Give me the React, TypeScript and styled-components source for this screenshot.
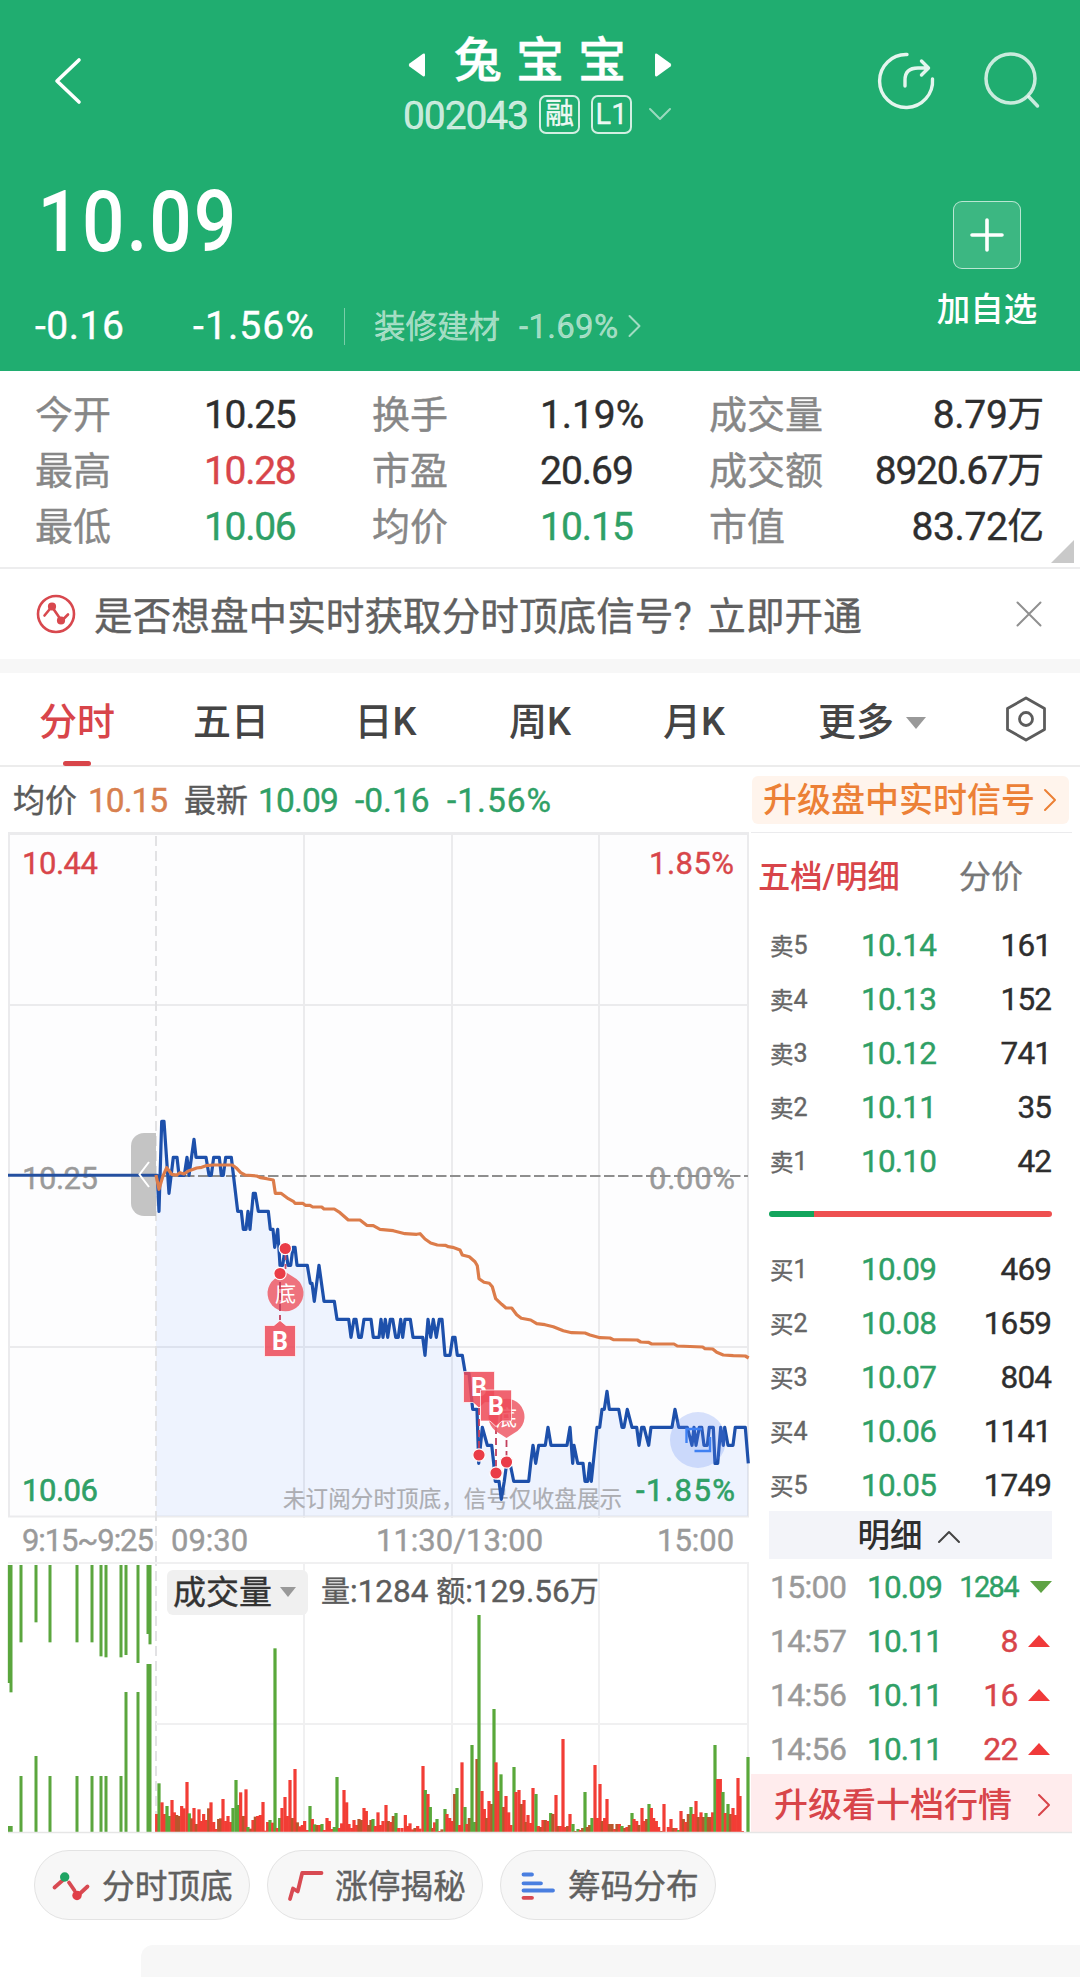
import React from 'react';
import styled, { createGlobalStyle } from 'styled-components';

const C = {
  green: '#20ad70',
  up: '#d8454a',
  down: '#2fa066',
  ink: '#2e2e2e',
  label: '#878787',
  mute: '#9a9a9a',
  rule: '#ebebed',
  orange: '#d8804f',
};

const Global = createGlobalStyle`
  * { box-sizing: border-box; }
  body {
    margin: 0;
    background: #fff;
    font-family: Roboto, "Noto Sans CJK SC", sans-serif;
    -webkit-text-stroke-width: 0.4px;
    color: ${C.ink};
    white-space: nowrap;
  }
  svg { display: block; flex: none; overflow: visible; }
`;

const Page = styled.main`
  width: 1080px;
  height: 1977px;
  overflow: hidden;
  background: #fff;
  display: flex;
  flex-direction: column;
`;

const Txt = styled.span<{ $size: number; $ls?: number; $color?: string; $w?: number; $weight?: number; $ml?: number }>`
  flex: none;
  font-size: ${p => p.$size}px;
  letter-spacing: ${p => p.$ls ?? 0}px;
  color: ${p => p.$color ?? 'inherit'};
  width: ${p => (p.$w ? `${p.$w}px` : 'auto')};
  font-weight: ${p => p.$weight ?? 400};
  -webkit-text-stroke-width: ${p => (p.$weight ? 0 : 0.4)}px;
  margin-left: ${p => p.$ml ?? 0}px;
`;

/* ---------- header ---------- */

const Header = styled.header`
  height: 371px;
  flex: none;
  background: ${C.green};
  color: #fff;
  padding-top: 30px;
`;

const Nav = styled.nav`
  display: grid;
  grid-template-columns: 1fr auto 1fr;
  height: 110px;
  padding: 0 39px;
`;

const NavIcons = styled.div<{ $end?: boolean }>`
  display: flex;
  gap: 44px;
  padding-top: 21px;
  justify-content: ${p => (p.$end ? 'flex-end' : 'flex-start')};
`;

const TitleBlock = styled.div`
  display: flex;
  flex-direction: column;
  align-items: center;
`;

const NameRow = styled.div`
  display: flex;
  align-items: center;
  height: 58px;
  padding-top: 11px;
  gap: 29px;
`;

const Name = styled.h1`
  margin: -7px -14px 0 0;
  font-size: 48px;
  font-weight: 500;
  letter-spacing: 14px;
  line-height: 50px;
`;

const CodeRow = styled.div`
  display: flex;
  align-items: center;
  height: 52px;
  width: 274px;
`;

const Code = styled.span`
  width: 129px;
  padding-top: 3px;
  font-size: 39px;
  letter-spacing: -1.1px;
  color: rgba(255, 255, 255, 0.76);
`;

const Tag = styled.span<{ $ml: number; $size: number }>`
  width: 41px;
  height: 39px;
  border: 2px solid rgba(255, 255, 255, 0.8);
  border-radius: 7px;
  display: flex;
  align-items: center;
  justify-content: center;
  font-size: ${p => p.$size}px;
  line-height: 35px;
  margin-left: ${p => p.$ml}px;
  color: rgba(255, 255, 255, 0.92);
`;

const Quote = styled.section`
  display: flex;
  justify-content: space-between;
  padding: 32px 41px 0 35px;
`;

const Price = styled.div`
  font-size: 86px;
  line-height: 100px;
  font-weight: 500;
  letter-spacing: 2.2px;
  padding-left: 3px;
  transform: scaleX(0.87);
  transform-origin: left;
  -webkit-text-stroke-width: 0;
`;

const ChangeRow = styled.div`
  display: flex;
  align-items: center;
  height: 44px;
  margin-top: 32px;
`;

const Sector = styled.a`
  display: flex;
  align-items: center;
  height: 37px;
  border-left: 1px solid rgba(255, 255, 255, 0.4);
  padding-left: 29px;
  color: rgba(255, 255, 255, 0.58);
`;

const SectorName = styled.span`
  width: 145px;
  margin-top: -4px;
  font-size: 31.5px;
`;

const AddBox = styled.div`
  width: 104px;
  padding-top: 29px;
  display: flex;
  flex-direction: column;
  align-items: center;
  gap: 21px;
  font-size: 33.5px;
  line-height: 40px;
  font-weight: 500;
  -webkit-text-stroke-width: 0;
`;

const AddButton = styled.div`
  width: 68px;
  height: 68px;
  border-radius: 9px;
  border: 1px solid rgba(255, 255, 255, 0.65);
  background: rgba(255, 255, 255, 0.13);
  display: flex;
  align-items: center;
  justify-content: center;
`;

/* ---------- stats ---------- */

const Stats = styled.section`
  flex: none;
  position: relative;
  display: grid;
  grid-template-columns: 169px 168px 168px 169px 120px 1fr;
  grid-auto-rows: 56px;
  line-height: 56px;
  height: 198px;
  padding: 16px 36px 0 35px;
  border-bottom: 2px solid #ededee;
  font-size: 38px;
`;

const StatLabel = styled.span`
  color: ${C.label};
`;

const StatValue = styled.span<{ $color?: string; $right?: boolean; $ls?: number }>`
  font-size: 39px;
  letter-spacing: ${p => p.$ls ?? -1.3}px;
  color: ${p => p.$color ?? C.ink};
  display: flex;
  justify-content: ${p => (p.$right ? 'flex-end' : 'flex-start')};
`;

const Unit = styled.span`
  font-size: 36.5px;
  letter-spacing: 0;
`;

const Corner = styled.i`
  position: absolute;
  right: 6px;
  bottom: 4px;
  border-left: 23px solid transparent;
  border-bottom: 23px solid #c9c9c9;
`;

const Notice = styled.section`
  flex: none;
  height: 90px;
  display: flex;
  align-items: center;
  padding: 0 38px 0 36px;
  font-size: 38.6px;
  color: #606060;
`;

const NoticeText = styled.span`
  margin-left: 18px;
  flex: 1;
  line-height: 60px;
  padding-top: 6px;
  letter-spacing: 0.05px;
  word-spacing: 6px;
`;

const Band = styled.div`
  flex: none;
  height: 14px;
  background: #f7f7f7;
`;

/* ---------- tabs ---------- */

const Tabs = styled.nav`
  flex: none;
  height: 94px;
  border-bottom: 2px solid #ececec;
  display: flex;
  padding-right: 33px;
`;

const Tab = styled.div<{ $active?: boolean; $w: number }>`
  position: relative;
  width: ${p => p.$w}px;
  height: 93px;
  line-height: 93px;
  padding-top: 6px;
  display: flex;
  align-items: center;
  justify-content: center;
  font-size: 38px;
  font-weight: 500;
  -webkit-text-stroke-width: 0;
  color: ${p => (p.$active ? C.up : '#444')};
  &::after {
    content: '';
    display: ${p => (p.$active ? 'block' : 'none')};
    position: absolute;
    bottom: 0;
    left: 63px;
    width: 28px;
    height: 5px;
    border-radius: 3px;
    background: ${C.up};
  }
`;

const Settings = styled.div`
  flex: 1;
  display: flex;
  justify-content: flex-end;
  align-items: center;
`;

const Caret = styled.i<{ $w: number; $h: number; $color: string; $ml?: number; $up?: boolean }>`
  flex: none;
  margin-left: ${p => p.$ml ?? 0}px;
  border-left: ${p => p.$w / 2}px solid transparent;
  border-right: ${p => p.$w / 2}px solid transparent;
  border-top: ${p => (p.$up ? 0 : p.$h)}px solid ${p => p.$color};
  border-bottom: ${p => (p.$up ? p.$h : 0)}px solid ${p => p.$color};
`;

const InfoRow = styled.section`
  flex: none;
  height: 65px;
  display: flex;
  align-items: center;
  padding: 0 11px 0 13px;
  line-height: 48px;
  color: #5a5a5a;
`;

const Readout = styled.div`
  display: flex;
  align-items: center;
  padding-top: 2px;
`;

const Upgrade = styled.a`
  margin-left: auto;
  width: 317px;
  height: 48px;
  border-radius: 6px;
  background: #fff4ec;
  display: flex;
  align-items: center;
  justify-content: space-between;
  padding: 1px 13px 0 11px;
  color: #ec8036;
  font-size: 34px;
  font-weight: 500;
  -webkit-text-stroke-width: 0;
`;

/* ---------- body ---------- */

const Body = styled.section`
  flex: none;
  display: flex;
  height: 1002px;
`;

const ChartColumn = styled.div`
  width: 751px;
  display: flex;
  flex-direction: column;
`;

const TimeAxis = styled.div`
  height: 45px;
  display: grid;
  grid-template-columns: 149px 205px 281px 1fr;
  padding-left: 22px;
  line-height: 45px;
  font-size: 31px;
  color: ${C.mute};
`;

const VolumeBox = styled.div`
  position: relative;
`;

const VolumeHead = styled.div`
  position: absolute;
  top: 6px;
  left: 167px;
  display: flex;
  align-items: center;
  color: #5c5c5c;
`;

const Reading = styled.div`
  margin: 0 0 0 13px;
  font-size: 29px;
  line-height: 45px;
`;

const Indicator = styled.div`
  width: 141px;
  height: 45px;
  border-radius: 6px;
  background: #f0f0f0;
  display: flex;
  align-items: center;
  padding-left: 6px;
  font-size: 33px;
  line-height: 45px;
  color: #333;
`;

const Book = styled.aside`
  width: 321px;
  display: flex;
  flex-direction: column;
  border-top: 1px solid ${C.rule};
`;

const BookTabs = styled.div`
  height: 85px;
  line-height: 89px;
  display: flex;
  padding-left: 7px;
`;

const BookRow = styled.div`
  height: 54px;
  display: grid;
  grid-template-columns: 91px 90px 1fr;
  align-items: center;
  padding: 0 21px 0 19px;
`;

const Level = styled.span`
  display: flex;
  align-items: center;
  font-size: 23.5px;
  color: #666;
`;

const RowPrice = styled.span`
  font-size: 31.5px;
  letter-spacing: -0.8px;
  color: ${C.down};
`;

const RowVolume = styled.span`
  font-size: 31.5px;
  letter-spacing: -0.9px;
  text-align: right;
  color: ${C.ink};
`;

const Ratio = styled.div`
  height: 6px;
  margin: 23px 20px 25px 18px;
  border-radius: 3px;
  background: linear-gradient(to right, #12a55c 45px, #ee5050 45px);
`;

const DetailHead = styled.div`
  height: 48px;
  margin: -1px 20px 1px 18px;
  background: #f3f4f9;
  display: flex;
  align-items: center;
  justify-content: center;
  gap: 15px;
  padding: 3px 4px 0 0;
  font-size: 32.5px;
  line-height: 45px;
  font-weight: 500;
  -webkit-text-stroke-width: 0;
`;

const Tick = styled.div`
  height: 54px;
  display: grid;
  grid-template-columns: 97px 78px 1fr 34px;
  align-items: center;
  padding: 0 20px 0 19px;
  font-size: 32px;
`;

const TickVolume = styled.span<{ $color: string; $size: number }>`
  text-align: right;
  color: ${p => p.$color};
  font-size: ${p => p.$size}px;
  letter-spacing: ${p => (p.$size < 30 ? -1.6 : -0.6)}px;
`;

const TickMark = styled.span<{ $up: boolean }>`
  display: flex;
  justify-content: flex-end;
  padding-right: ${p => (p.$up ? 2 : 0)}px;
`;

const TenLevels = styled.a`
  height: 58px;
  margin-top: -2px;
  background: #ffeced;
  display: flex;
  align-items: center;
  justify-content: space-between;
  padding: 4px 22px 0 23px;
  font-size: 34px;
  line-height: 54px;
  font-weight: 500;
  -webkit-text-stroke-width: 0;
  color: ${C.up};
`;

/* ---------- footer ---------- */

const Pills = styled.div`
  flex: none;
  display: flex;
  gap: 17px;
  padding: 16px 34px 0;
`;

const Pill = styled.a`
  width: 216px;
  height: 70px;
  border-radius: 35px;
  border: 1px solid #e3e3e3;
  background: #f7f7f7;
  display: flex;
  align-items: center;
  gap: 12px;
  padding: 0 0 3px 17px;
  font-size: 32.7px;
  color: #606060;
`;

const Sheet = styled.div`
  flex: none;
  height: 32px;
  margin: 25px 0 0 141px;
  border-top-left-radius: 12px;
  background: #f7f7f7;
`;

/* ---------- data ---------- */

// Minute prices of the session: [x in thirds of a pixel, cents below the previous close].
const MORNING: number[][] = [
  [468, 0], [472, 0], [477, 2], [485, -3], [492, -3], [507, 1], [520, -1], [531, -1], [537, 0], [553, 0], [561, -1], [567, 0],
  [582, -2], [588, -1], [618, -1], [627, 0], [634, 0], [641, -1], [658, -1], [664, 0], [670, 0], [677, -1], [694, -1], [713, 2],
  [724, 2], [730, 3], [738, 3], [744, 2], [750, 3], [760, 1], [766, 1], [775, 2], [805, 2], [811, 3], [819, 3], [824, 4],
  [833, 3], [840, 5], [848, 5], [856, 4], [864, 5], [872, 5], [879, 4], [885, 4], [891, 5], [922, 5], [931, 6], [936, 6],
  [943, 7], [957, 5], [972, 7], [1003, 7], [1011, 8], [1046, 8], [1053, 9], [1062, 8], [1068, 8], [1076, 9], [1084, 9],
  [1092, 8], [1113, 8], [1120, 9], [1137, 9], [1143, 8], [1149, 9], [1156, 8], [1163, 9], [1171, 8], [1178, 8], [1187, 9],
  [1195, 9], [1202, 8],
];
const AFTERNOON: number[][] = [
  [8, 9], [15, 8], [31, 8], [39, 9], [68, 9], [75, 10], [84, 8], [92, 9], [100, 8], [109, 9], [118, 8], [126, 8], [135, 10],
  [150, 10], [158, 9], [165, 9], [172, 10], [187, 10], [196, 11], [207, 11], [218, 13], [231, 13], [236, 16], [247, 14],
  [262, 15], [275, 15], [281, 16], [286, 17], [297, 17], [304, 18], [313, 17], [320, 16], [330, 16], [341, 17], [386, 17],
  [392, 16], [399, 15], [407, 16], [416, 15], [436, 15], [444, 14], [453, 15], [501, 15], [510, 14], [518, 16], [522, 15],
  [533, 16], [549, 16], [555, 17], [563, 17], [569, 16], [574, 17], [591, 14], [599, 14], [606, 13], [613, 13], [621, 12],
  [628, 13], [656, 13], [666, 14], [672, 14], [682, 13], [696, 14], [710, 14], [717, 15], [725, 14], [732, 14], [746, 15],
  [753, 14], [816, 14], [825, 13], [836, 14], [862, 14], [876, 15], [882, 14], [888, 15], [898, 14], [905, 14], [912, 15],
  [922, 15], [928, 14], [940, 14], [945, 16], [953, 16], [962, 14], [970, 15], [974, 14], [984, 15], [999, 15], [1006, 14],
  [1036, 14], [1045, 16],
];
const AVG_AM: number[][] = [
  [468, 345], [477, 388], [488, 350], [500, 323], [515, 343], [530, 345], [540, 338], [552, 342], [565, 333], [580, 328],
  [590, 324], [605, 322], [618, 317], [640, 315], [697, 315], [710, 325], [722, 338], [735, 345], [770, 348], [782, 353],
  [800, 356], [820, 360], [826, 400], [843, 400], [865, 416], [880, 424], [885, 430], [908, 430], [916, 436], [930, 436],
  [938, 441], [965, 441], [972, 447], [1003, 447], [1020, 458], [1045, 480], [1080, 480], [1100, 496], [1120, 497],
  [1140, 508], [1180, 512], [1215, 521], [1250, 523],
];
const AVG_PM: number[][] = [
  [60, 101], [75, 117], [92, 129], [112, 135], [136, 136], [145, 140], [158, 142], [180, 150], [187, 165], [208, 170],
  [225, 185], [232, 197], [237, 236], [252, 247], [268, 250], [277, 260], [287, 296], [305, 313], [318, 324], [335, 324],
  [350, 344], [364, 355], [392, 360], [410, 371], [435, 374], [460, 380], [490, 392], [515, 398], [555, 399], [570, 405],
  [600, 413], [630, 414], [640, 419], [712, 420], [722, 426], [745, 427], [755, 432], [822, 432], [832, 438], [908, 441],
  [915, 446], [938, 447], [950, 457], [970, 465], [1000, 467], [1036, 468], [1046, 474],
];

const level = (n: number) => 1175.3 + 18 * n;
const pricePts = [
  ...MORNING.map(([x, n]) => [x / 3, level(n)]),
  ...AFTERNOON.map(([x, n]) => [400 + x / 3, level(n)]),
];
const avgPts = [
  ...AVG_AM.map(([x, y]) => [x / 3, 1060 + y / 3]),
  ...AVG_PM.map(([x, y]) => [400 + x / 3, 1200 + y / 3]),
];
const join = (pts: number[][]) => pts.map(p => `${p[0].toFixed(1)},${p[1].toFixed(1)}`).join(' ');

// Minute volumes: x, top and tone (r rising, g falling, m mixed).
const VOL_AM =
  '470 942 r,477 850 g,486 907 r,493 942 r,501 918 g,508 948 g,516 900 r,523 937 r,530 945 m,537 948 m,545 918 r,552 925 r,561 846 r,568 940 g,575 955 m,582 924 r,589 972 m,597 928 r,604 963 r,611 942 r,618 960 r,626 925 m,633 907 r,641 966 r,648 987 r,656 957 m,662 955 m,669 897 r,677 963 r,684 948 r,692 966 r,699 924 g,708 840 g,715 915 g,722 877 r,730 948 m,738 868 r,744 981 g,752 986 m,759 960 r,766 950 m,773 948 r,781 945 r,789 906 r,796 992 r,803 966 r,810 960 g,818 968 r,825 445 g,832 984 r,839 954 g,846 924 r,855 891 r,862 948 r,870 840 r,877 954 m,885 807 r,892 967 m,899 979 r,907 975 r,914 963 r,922 990 r,930 918 g,937 957 r,944 973 g,951 975 m,959 975 r,966 972 g,973 990 r,981 954 r,988 963 r,996 987 r,1003 981 g,1011 831 g,1018 984 r,1025 970 r,1032 870 r,1040 907 r,1047 972 r,1055 984 r,1062 960 r,1070 975 r,1077 957 m,1084 960 m,1092 924 r,1099 933 r,1106 975 m,1113 960 m,1119 957 g,1126 978 r,1134 937 r,1141 975 r,1149 963 r,1158 915 r,1165 963 m,1173 966 r,1180 948 m,1188 939 g,1196 984 r,1206 984 r,1216 945 r,1223 978 r,1230 970 r,1238 988 r,1245 984 m,1253 978 r,1260 986 r';
const VOL_PM =
  '69 798 r,76 870 g,84 882 r,91 921 g,98 984 m,104 967 r,111 957 g,118 993 r,126 988 m,135 927 g,141 942 r,149 954 r,156 963 r,164 882 m,171 864 g,179 975 r,186 787 r,195 921 g,201 972 r,208 954 m,216 735 g,223 966 g,231 777 m,237 345 g,246 873 r,253 927 r,260 954 m,267 903 r,275 912 m,282 627 g,288 787 r,296 873 r,303 823 g,311 921 m,318 888 r,326 937 r,333 975 r,342 801 g,348 876 r,357 870 r,364 912 m,372 900 r,378 966 m,384 945 r,392 969 r,399 864 r,408 882 g,415 978 r,422 981 m,429 960 r,436 960 m,444 963 r,452 939 g,459 942 m,468 885 r,474 978 m,481 978 r,489 717 r,496 981 r,503 978 m,510 942 r,519 972 g,526 993 m,534 987 g,541 990 r,548 984 m,555 876 g,562 981 m,569 975 m,576 954 g,585 795 r,592 954 r,600 852 r,607 963 m,614 954 r,621 897 r,628 972 m,636 972 m,644 987 r,651 972 m,658 972 r,666 978 g,674 984 m,681 981 r,688 975 m,696 939 g,702 957 r,710 963 r,717 975 m,726 924 r,733 963 r,740 957 m,747 912 g,754 924 r,761 954 r,769 963 r,776 981 r,784 993 m,792 912 r,805 981 r,813 957 r,820 984 m,828 984 r,836 990 g,843 933 r,850 957 m,857 966 r,865 942 m,873 921 g,880 942 r,888 903 r,895 951 m,903 937 r,910 951 m,918 939 g,925 951 m,932 951 m,938 937 r,945 735 g,953 837 r,961 837 r,969 876 g,976 939 r,984 912 g,991 942 m,999 924 r,1006 945 r,1014 834 r,1020 888 r,1027 993 r,1044 771 g';

const TONES: Record<string, string> = { r: '#f23d35', g: '#59a83a', m: '#b8562c' };
const parseBars = (src: string, x0: number) =>
  src.split(',').map(s => {
    const [x, y, t] = s.split(' ');
    return { x: x0 + Number(x) / 3, y: 1500 + Number(y) / 3, fill: TONES[t] };
  });
const BARS = [...parseBars(VOL_AM, 0), ...parseBars(VOL_PM, 400)];

// Call-auction bars: x, top and bottom, width.
const AUCTION: number[][] = [
  [28.5, 195, 549, 10], [33, 195, 577, 9], [63, 195, 427, 9], [108, 195, 367, 9], [150, 195, 427, 9], [231, 195, 427, 9],
  [276, 195, 427, 9], [303, 195, 469, 9], [318, 195, 472, 9], [363, 195, 472, 9], [378, 195, 465, 9], [414, 195, 489, 9],
  [446, 195, 402, 13], [450, 195, 433, 9],
  [31, 978, 996, 14], [63, 828, 996, 9], [108, 768, 996, 9], [150, 828, 996, 9], [231, 828, 996, 9], [276, 828, 996, 9],
  [303, 828, 996, 9], [318, 828, 996, 9], [363, 828, 996, 9], [378, 576, 996, 9], [414, 576, 996, 9], [447, 492, 996, 15],
];

const STATS: { k: string; v: string; u?: string; c?: string; r?: boolean; ls?: number }[] = [
  { k: '今开', v: '10.25' }, { k: '换手', v: '1.19%', ls: -0.1 }, { k: '成交量', v: '8.79', u: '万', r: true, ls: -0.3 },
  { k: '最高', v: '10.28', c: C.up }, { k: '市盈', v: '20.69', ls: -1 }, { k: '成交额', v: '8920.67', u: '万', r: true },
  { k: '最低', v: '10.06', c: C.down }, { k: '均价', v: '10.15', c: C.down, ls: -1 }, { k: '市值', v: '83.72', u: '亿', r: true, ls: -0.4 },
];

const SELLS = [['卖', '5', '10.14', '161'], ['卖', '4', '10.13', '152'], ['卖', '3', '10.12', '741'], ['卖', '2', '10.11', '35'], ['卖', '1', '10.10', '42']];
const BUYS = [['买', '1', '10.09', '469'], ['买', '2', '10.08', '1659'], ['买', '3', '10.07', '804'], ['买', '4', '10.06', '1141'], ['买', '5', '10.05', '1749']];
const TICKS = [
  { t: '15:00', p: '10.09', v: '1284', up: false },
  { t: '14:57', p: '10.11', v: '8', up: true },
  { t: '14:56', p: '10.11', v: '16', up: true },
  { t: '14:56', p: '10.11', v: '22', up: true },
];

/* ---------- parts ---------- */

const Chevron = ({ w, h, sw, color = 'currentColor', d }: { w: number; h: number; sw: number; color?: string; d: string }) => (
  <svg width={w} height={h} viewBox={`0 0 ${w} ${h}`} fill="none" stroke={color} strokeWidth={sw} strokeLinecap="round" strokeLinejoin="round">
    <path d={d} />
  </svg>
);

const ChartLabel = ({ x, y, w, fill, size = 31, sw = 0.4, children }: { x: number; y: number; w: number; fill: string; size?: number; sw?: number; children: string }) => (
  <text x={x} y={y} textLength={w} fill={fill} fontSize={size} stroke={fill} strokeWidth={sw}>{children}</text>
);

const Dot = ({ x, y }: { x: number; y: number }) => <circle cx={x} cy={y} r="6.2" fill="#ea3c47" stroke="#fff" strokeWidth="1.2" />;

const Buy = ({ x, y, tip }: { x: number; y: number; tip: 'up' | 'down' }) => (
  <g>
    <path
      d={tip === 'up'
        ? `M${x - 15.5} ${y - 15.5}H${x - 6}L${x} ${y - 20.5}L${x + 6} ${y - 15.5}H${x + 15.5}V${y + 15.5}H${x - 15.5}Z`
        : `M${x - 15.5} ${y - 15.5}H${x + 15.5}V${y + 15.5}H${x + 6}L${x} ${y + 21}L${x - 6} ${y + 15.5}H${x - 15.5}Z`}
      fill="#ee4a58" fillOpacity="0.86" stroke="#fff" strokeOpacity="0.7" strokeWidth="1"
    />
    <text x={x} y={y + 9} textAnchor="middle" fontSize="25" fontWeight="700" fill="#fff">B</text>
  </g>
);

const Bottom = ({ x, y, tip }: { x: number; y: number; tip: number }) => (
  <g>
    <path
      d={`M${x - 11} ${y + 14 * tip}L${x} ${y + 21 * tip}L${x + 11} ${y + 14 * tip}A18 18 0 1 ${tip > 0 ? 0 : 1} ${x - 11} ${y + 14 * tip}Z`}
      fill="#ee5c68" fillOpacity="0.86"
    />
    <text x={x} y={y + 8} textAnchor="middle" fontSize="21" fill="#fff">底</text>
  </g>
);

const PriceChart = () => (
  <svg width="751" height="686" viewBox="0 832 751 686">
    <rect x="9" y="833" width="739" height="683" fill="#fdfdfe" />
    <g stroke={C.rule} strokeWidth="2" fill="none">
      <path d="M8 833.5H749" strokeWidth="3" />
      <path d="M9 833V1516.5H748V833M9 1005H748M9 1347H748M304 833V1518M452 833V1518M599 833V1518" />
    </g>
    <polygon points={`156,1516 ${join(pricePts)} 748,1516`} fill="#4f8bff" fillOpacity="0.085" />
    <path d="M156 836V1833" stroke="#e2e2e4" strokeWidth="2" strokeDasharray="10 5" />
    <ChartLabel x={22} y={874} w={76} fill={C.up}>10.44</ChartLabel>
    <ChartLabel x={649} y={874} w={85} fill={C.up}>1.85%</ChartLabel>
    <ChartLabel x={22} y={1189} w={76} fill={C.mute}>10.25</ChartLabel>
    <ChartLabel x={649} y={1189} w={86} fill={C.mute}>0.00%</ChartLabel>
    <ChartLabel x={22} y={1501} w={76} fill={C.down} sw={0.6}>10.06</ChartLabel>
    <ChartLabel x={283} y={1507} w={339} fill="#acadb2" size={22.5} sw={0.2}>未订阅分时顶底，信号仅收盘展示</ChartLabel>
    <ChartLabel x={636} y={1501} w={99} fill={C.down} sw={0.6}>-1.85%</ChartLabel>
    <path d="M156 1176H748" stroke="#8e8e8e" strokeWidth="1.8" strokeDasharray="10.5 3.5" />
    <path d="M131 1216m13 0h12v-83h-12a13 13 0 0 0 -13 13v57a13 13 0 0 0 13 13z" fill="#bfbfbf" fillOpacity="0.92" />
    <path d="M8 1175.3H156" stroke="#2450a0" strokeWidth="3" />
    <path d="M149 1162L139.500 1174.500L149 1187" fill="none" stroke="#fff" strokeWidth="2" />
    <polyline points={join(pricePts)} fill="none" stroke="#1d50ab" strokeWidth="3.2" strokeLinejoin="round" />
    <polyline points={join(avgPts)} fill="none" stroke="#dc7c4a" strokeWidth="3.2" strokeLinejoin="round" />
    <path d="M285.500 1255V1276" stroke="#c8506a" strokeWidth="1.8" strokeDasharray="5 4" />
    <Bottom x={285.5} y={1293} tip={-1} />
    <path d="M280 1282V1320M479 1408V1450M496 1427V1468M506.500 1440V1458" stroke="#c23f5c" strokeWidth="1.8" strokeDasharray="7 4" />
    <Dot x={285.3} y={1248.5} />
    <Dot x={280} y={1273.5} />
    <Buy x={280} y={1341} tip="up" />
    <Bottom x={506.5} y={1417} tip={1} />
    <Buy x={479} y={1387} tip="down" />
    <Buy x={496} y={1405.5} tip="down" />
    <Dot x={479} y={1455} />
    <Dot x={496} y={1473} />
    <Dot x={506.5} y={1462} />
    <circle cx="698" cy="1440" r="28" fill="#5b84f2" fillOpacity="0.24" />
    <path d="M686.500 1443V1429H702M694.500 1451H710V1437" fill="none" stroke="#3f80f2" strokeWidth="2.4" />
  </svg>
);

const VolumeChart = () => (
  <svg width="751" height="271" viewBox="0 1563 751 271">
    <path d="M8 1563H749M748 1563V1832M156 1724H748M304 1563V1832M452 1563V1832M599 1563V1832" stroke="#f0f0f1" strokeWidth="2" fill="none" />
    {AUCTION.map(([x, t, b, w], i) => (
      <rect key={i} x={(x - w / 2) / 3} y={1500 + t / 3} width={w / 3} height={(b - t) / 3} fill="#5ba63e" />
    ))}
    {BARS.map((b, i) => (
      <rect key={i} x={b.x - 1.6} y={b.y} width="3.2" height={1832 - b.y} fill={b.fill} />
    ))}
    <path d="M8 1832.500H1072" stroke="#e6e6e6" strokeWidth="1.5" />
  </svg>
);

const BookRows = ({ rows }: { rows: string[][] }) => (
  <>
    {rows.map(([side, n, price, vol]) => (
      <BookRow key={side + n}>
        <Level>{side}<Txt $size={25}>{n}</Txt></Level>
        <RowPrice>{price}</RowPrice>
        <RowVolume>{vol}</RowVolume>
      </BookRow>
    ))}
  </>
);

export default function App() {
  return (
    <Page>
      <Global />
      <Header>
        <Nav>
          <NavIcons>
            <svg width="60" height="60" viewBox="39 51 60 60" fill="none" stroke="#fff" strokeWidth="3.6" strokeLinecap="round" strokeLinejoin="round">
              <path d="M79 60L57 81L79 102" />
            </svg>
          </NavIcons>
          <TitleBlock>
            <NameRow>
              <svg width="17" height="24" viewBox="0 0 17 24"><path d="M1.500 10.500L15 .8Q17 0 17 2V22Q17 24 15 23.200L1.500 13.500Q0 12 1.500 10.500Z" fill="#fff" /></svg>
              <Name>兔宝宝</Name>
              <svg width="17" height="24" viewBox="0 0 17 24"><path d="M15.500 10.500L2 .8Q0 0 0 2V22Q0 24 2 23.200L15.500 13.500Q17 12 15.500 10.500Z" fill="#fff" /></svg>
            </NameRow>
            <CodeRow>
              <Code>002043</Code>
              <Tag $ml={7} $size={29}>融</Tag>
              <Tag $ml={11} $size={29}>L1</Tag>
              <Txt $size={10} $ml={17}>
                <Chevron w={22} h={12} sw={2} color="rgba(255,255,255,0.55)" d="M1 1L11 11L21 1" />
              </Txt>
            </CodeRow>
          </TitleBlock>
          <NavIcons $end>
            <svg width="60" height="60" viewBox="877 51 60 60" fill="none" stroke="rgba(255,255,255,0.88)" strokeWidth="3.4" strokeLinecap="round" strokeLinejoin="round">
              <path d="M907 54.500A26.500 26.500 0 1 0 932.500 79" />
              <path d="M905 86V80Q905 68 918 68H928M921.500 61L928.500 68L921.500 75" />
            </svg>
            <svg width="60" height="60" viewBox="981 51 60 60" fill="none" stroke="rgba(255,255,255,0.76)" strokeWidth="3.500" strokeLinecap="round">
              <circle cx="1010.500" cy="78.500" r="24.500" />
              <path d="M1029 97L1037.500 106" />
            </svg>
          </NavIcons>
        </Nav>
        <Quote>
          <div>
            <Price>10.09</Price>
            <ChangeRow>
              <Txt $size={39} $ls={0.5} $w={158}>-0.16</Txt>
              <Txt $size={39} $ls={1.1} $w={151}>-1.56%</Txt>
              <Sector>
                <SectorName>装修建材</SectorName>
                <Txt $size={33} $ls={0.3} $w={109}>-1.69%</Txt>
                <Chevron w={13} h={22} sw={2} d="M1.500 1L11.500 11L1.500 21" />
              </Sector>
            </ChangeRow>
          </div>
          <AddBox>
            <AddButton>
              <svg width="34" height="34" viewBox="0 0 34 34" stroke="#fff" strokeWidth="3.600" strokeLinecap="round"><path d="M17 2V32M2 17H32" /></svg>
            </AddButton>
            加自选
          </AddBox>
        </Quote>
      </Header>

      <Stats>
        {STATS.map(s => (
          <React.Fragment key={s.k}>
            <StatLabel>{s.k}</StatLabel>
            <StatValue $color={s.c} $right={s.r} $ls={s.ls}>{s.v}{s.u && <Unit>{s.u}</Unit>}</StatValue>
          </React.Fragment>
        ))}
        <Corner />
      </Stats>

      <Notice>
        <svg width="40" height="40" viewBox="0 0 40 40" fill="none" stroke="#d8484e" strokeWidth="2.600" strokeLinecap="round" strokeLinejoin="round">
          <circle cx="20" cy="20" r="18" />
          <path d="M8.500 21.500L15.500 13M17.500 15L24 24.500M27 25.500L32 20.500" />
          <circle cx="16" cy="12.500" r="2.800" fill="#d8484e" />
          <circle cx="25" cy="26.500" r="2.800" fill="#d8484e" />
        </svg>
        <NoticeText>是否想盘中实时获取分时顶底信号? 立即开通</NoticeText>
        <Chevron w={26} h={26} sw={2} color="#909090" d="M1.500 1.500L24.500 24.500M24.500 1.500L1.500 24.500" />
      </Notice>
      <Band />

      <Tabs>
        <Tab $w={154} $active>分时</Tab>
        <Tab $w={154}>五日</Tab>
        <Tab $w={155}>日K</Tab>
        <Tab $w={154}>周K</Tab>
        <Tab $w={154}>月K</Tab>
        <Tab $w={202}>更多<Caret $w={20} $h={12} $color="#999" $ml={12} /></Tab>
        <Settings>
          <svg width="42" height="46" viewBox="0 0 42 46" fill="none" stroke="#5c5c5c" strokeWidth="2.800" strokeLinejoin="round">
            <path d="M21 2L39.500 12.500V33.500L21 44L2.500 33.500V12.500Z" />
            <circle cx="21" cy="23" r="6.500" />
          </svg>
        </Settings>
      </Tabs>

      <InfoRow>
        <Readout>
          <Txt $size={32} $w={75}>均价</Txt>
          <Txt $size={33.5} $ls={-1} $w={96} $color={C.orange}>10.15</Txt>
          <Txt $size={32} $w={74}>最新</Txt>
          <Txt $size={33.5} $ls={-0.8} $w={97} $color={C.down}>10.09</Txt>
          <Txt $size={33.5} $w={92} $color={C.down}>-0.16</Txt>
          <Txt $size={33.5} $ls={1} $color={C.down}>-1.56%</Txt>
        </Readout>
        <Upgrade>升级盘中实时信号<Chevron w={12} h={22} sw={2} d="M1 1L11 11L1 21" /></Upgrade>
      </InfoRow>

      <Body>
        <ChartColumn>
          <PriceChart />
          <TimeAxis>
            <Txt $size={31} $ls={-1.1}>9:15~9:25</Txt>
            <Txt $size={31}>09:30</Txt>
            <Txt $size={31}>11:30/13:00</Txt>
            <Txt $size={31}>15:00</Txt>
          </TimeAxis>
          <VolumeBox>
            <VolumeChart />
            <VolumeHead>
              <Indicator>成交量<Caret $w={16} $h={10} $color="#999" $ml={8} /></Indicator>
              <Reading>量<Txt $size={31.5}>:1284 </Txt>额<Txt $size={31.5}>:129.56</Txt>万</Reading>
            </VolumeHead>
          </VolumeBox>
        </ChartColumn>

        <Book>
          <BookTabs>
            <Txt $size={32.3} $w={201} $color={C.up} $weight={500}>五档/明细</Txt>
            <Txt $size={32} $color="#777">分价</Txt>
          </BookTabs>
          <BookRows rows={SELLS} />
          <Ratio />
          <BookRows rows={BUYS} />
          <DetailHead>明细<Chevron w={22} h={12} sw={2} color="#444" d="M1 11L11 1L21 11" /></DetailHead>
          {TICKS.map((k, i) => (
            <Tick key={i}>
              <Txt $size={32} $ls={-0.7} $color={C.mute}>{k.t}</Txt>
              <RowPrice>{k.p}</RowPrice>
              <TickVolume $color={k.up ? C.up : C.down} $size={k.v.length > 3 ? 29 : 32}>{k.v}</TickVolume>
              <TickMark $up={k.up}><Caret $w={23} $h={12} $color={k.up ? '#f03a3a' : '#5fa345'} $up={k.up} /></TickMark>
            </Tick>
          ))}
          <TenLevels>升级看十档行情<Chevron w={12} h={22} sw={2} d="M1 1L11 11L1 21" /></TenLevels>
        </Book>
      </Body>

      <Pills>
        <Pill>
          <svg width="38" height="30" viewBox="0 0 38 30" fill="none" stroke="#d84a52" strokeWidth="3.8" strokeLinecap="round" strokeLinejoin="round">
            <path d="M2.500 18.500L11 11M17 13.500L22.500 21.500M28 24.500L35.500 17.500" />
            <circle cx="12.700" cy="8" r="4.700" fill="#1fa463" stroke="none" />
            <circle cx="25" cy="26.500" r="4.700" fill="#e03f48" stroke="none" />
          </svg>
          分时顶底
        </Pill>
        <Pill>
          <svg width="38" height="30" viewBox="0 0 38 30" fill="none" stroke="#d84a52" strokeWidth="3.8" strokeLinecap="round" strokeLinejoin="round">
            <path d="M5 30L8 19.500L12.700 22.500L17.200 4H36.500" />
          </svg>
          涨停揭秘
        </Pill>
        <Pill>
          <svg width="38" height="30" viewBox="0 0 38 30" fill="none" stroke="#4a7fe0" strokeWidth="3.800" strokeLinecap="round">
            <path d="M5.500 5.500H14M5.500 14.300H23M5.500 21.500H35" />
            <path d="M5.500 28.800H14" stroke="#d84a52" />
          </svg>
          筹码分布
        </Pill>
      </Pills>
      <Sheet />
    </Page>
  );
}
